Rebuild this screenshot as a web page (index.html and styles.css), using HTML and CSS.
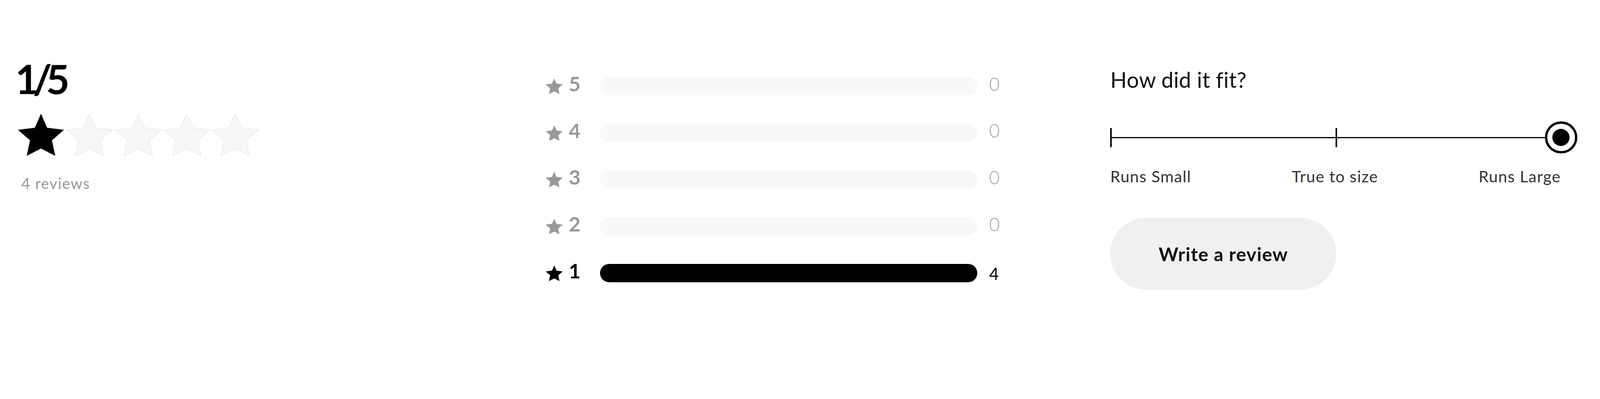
FILE: index.html
```html
<!DOCTYPE html>
<html lang="en">
<head>
<meta charset="utf-8">
<title>Reviews summary</title>
<link rel="stylesheet" href="styles.css">
</head>
<body>
<section class="reviews-summary">
  <div class="col-average">
    <div class="score">1/5</div>
    <div class="stars">
      <svg class="star star-full" viewBox="0 0 125.3 115"><polygon points="62.65,0 79.5,38.4 125.3,44 92.5,72.7 101.5,115 62.65,95 23.8,115 32.8,72.7 0,44 45.8,38.4"/></svg>
      <svg class="star star-empty" viewBox="0 0 125.3 115"><polygon points="62.65,0 79.5,38.4 125.3,44 92.5,72.7 101.5,115 62.65,95 23.8,115 32.8,72.7 0,44 45.8,38.4"/></svg>
      <svg class="star star-empty" viewBox="0 0 125.3 115"><polygon points="62.65,0 79.5,38.4 125.3,44 92.5,72.7 101.5,115 62.65,95 23.8,115 32.8,72.7 0,44 45.8,38.4"/></svg>
      <svg class="star star-empty" viewBox="0 0 125.3 115"><polygon points="62.65,0 79.5,38.4 125.3,44 92.5,72.7 101.5,115 62.65,95 23.8,115 32.8,72.7 0,44 45.8,38.4"/></svg>
      <svg class="star star-empty" viewBox="0 0 125.3 115"><polygon points="62.65,0 79.5,38.4 125.3,44 92.5,72.7 101.5,115 62.65,95 23.8,115 32.8,72.7 0,44 45.8,38.4"/></svg>
    </div>
    <div class="review-count">4 reviews</div>
  </div>

  <div class="col-histogram">
    <div class="hist-row">
      <svg class="hist-star" viewBox="0 0 125.3 115"><polygon points="62.65,0 79.5,38.4 125.3,44 92.5,72.7 101.5,115 62.65,95 23.8,115 32.8,72.7 0,44 45.8,38.4"/></svg>
      <span class="hist-num">5</span>
      <div class="hist-bar"><div class="hist-fill" style="width:0%"></div></div>
      <span class="hist-count">0</span>
    </div>
    <div class="hist-row">
      <svg class="hist-star" viewBox="0 0 125.3 115"><polygon points="62.65,0 79.5,38.4 125.3,44 92.5,72.7 101.5,115 62.65,95 23.8,115 32.8,72.7 0,44 45.8,38.4"/></svg>
      <span class="hist-num">4</span>
      <div class="hist-bar"><div class="hist-fill" style="width:0%"></div></div>
      <span class="hist-count">0</span>
    </div>
    <div class="hist-row">
      <svg class="hist-star" viewBox="0 0 125.3 115"><polygon points="62.65,0 79.5,38.4 125.3,44 92.5,72.7 101.5,115 62.65,95 23.8,115 32.8,72.7 0,44 45.8,38.4"/></svg>
      <span class="hist-num">3</span>
      <div class="hist-bar"><div class="hist-fill" style="width:0%"></div></div>
      <span class="hist-count">0</span>
    </div>
    <div class="hist-row">
      <svg class="hist-star" viewBox="0 0 125.3 115"><polygon points="62.65,0 79.5,38.4 125.3,44 92.5,72.7 101.5,115 62.65,95 23.8,115 32.8,72.7 0,44 45.8,38.4"/></svg>
      <span class="hist-num">2</span>
      <div class="hist-bar"><div class="hist-fill" style="width:0%"></div></div>
      <span class="hist-count">0</span>
    </div>
    <div class="hist-row is-active">
      <svg class="hist-star" viewBox="0 0 125.3 115"><polygon points="62.65,0 79.5,38.4 125.3,44 92.5,72.7 101.5,115 62.65,95 23.8,115 32.8,72.7 0,44 45.8,38.4"/></svg>
      <span class="hist-num">1</span>
      <div class="hist-bar"><div class="hist-fill" style="width:100%"></div></div>
      <span class="hist-count">4</span>
    </div>
  </div>

  <div class="col-fit">
    <div class="fit-title">How did it fit?</div>
    <div class="fit-slider">
      <div class="fit-track">
        <span class="fit-tick"></span>
        <span class="fit-seg"></span>
        <span class="fit-tick"></span>
        <span class="fit-seg"></span>
      </div>
      <span class="fit-knob"><span class="fit-dot"></span></span>
    </div>
    <div class="fit-labels">
      <span>Runs Small</span>
      <span>True to size</span>
      <span>Runs Large</span>
    </div>
    <button class="write-btn" type="button">Write a review</button>
  </div>
</section>
</body>
</html>
```

FILE: styles.css
```css
/* 1rem = 10 units of the 4414-wide design */
html {
  font-size: calc(100vw / 441.4);
}

html, body {
  margin: 0;
  padding: 0;
  background: #ffffff;
}

body {
  font-family: "Lato", "Liberation Sans", sans-serif;
  color: #111111;
  width: 100vw;
  height: 100vh;
  overflow: hidden;
}

.reviews-summary {
  display: flex;
  align-items: flex-start;
}

/* ---------- left: average ---------- */
.col-average {
  box-sizing: border-box;
  width: 150.5rem;
  padding-left: 4.2rem;
  padding-top: 16.1rem;
  display: flex;
  flex-direction: column;
}

.score {
  font-size: 11.2rem;
  line-height: 11.2rem;
  height: 11.2rem;
  font-weight: 700;
  color: #000;
  letter-spacing: -1.6rem;
}

.stars {
  display: flex;
  margin-top: 4.1rem;
  margin-left: 0.75rem;
  height: 11.7rem;
}

.star {
  width: 12.7rem;
  height: 11.7rem;
  margin-right: 0.7rem;
  display: block;
  overflow: visible;
}

.star-full polygon {
  fill: #000;
}

.star-empty polygon {
  fill: #f7f7f7;
  stroke: #e6e6e6;
  stroke-width: 1.3;
  stroke-linejoin: round;
}

.review-count {
  margin-top: 5.5rem;
  margin-left: 1.7rem;
  font-size: 4.1rem;
  line-height: 4rem;
  letter-spacing: 0.2rem;
  color: #999999;
}

/* ---------- middle: histogram ---------- */
.col-histogram {
  box-sizing: border-box;
  width: 155.8rem;
  padding-top: 21.3rem;
  display: flex;
  flex-direction: column;
  gap: 7.9rem;
}

.hist-row {
  display: flex;
  align-items: center;
  height: 5rem;
}

.hist-star {
  width: 4.7rem;
  height: 4.3rem;
  display: block;
  margin-right: 1.7rem;
}

.hist-star polygon {
  fill: #999999;
}

.hist-num {
  width: 8.6rem;
  font-size: 5.6rem;
  line-height: 5.6rem;
  padding-bottom: 1.3rem;
  font-weight: 700;
  color: #999999;
}

.hist-bar {
  width: 104.1rem;
  height: 5rem;
  border-radius: 2.5rem;
  background: #f8f8f8;
  overflow: hidden;
}

.hist-fill {
  height: 100%;
  background: #000;
  border-radius: 2.5rem;
}

.hist-count {
  margin-left: 3.3rem;
  font-size: 5rem;
  line-height: 5rem;
  padding-bottom: 1.3rem;
  color: #a3a3a3;
  font-weight: 300;
}

.is-active .hist-star polygon {
  fill: #000;
}

.is-active .hist-num {
  color: #000;
}

.is-active .hist-count {
  color: #000;
  font-size: 4.6rem;
  line-height: 4.6rem;
  font-weight: 400;
  padding-bottom: 0;
  padding-top: 0.4rem;
}

/* ---------- right: fit ---------- */
.col-fit {
  box-sizing: border-box;
  width: 128.8rem;
  padding-top: 19rem;
  display: flex;
  flex-direction: column;
  align-items: flex-start;
}

.fit-title {
  font-size: 6rem;
  line-height: 6rem;
  color: #111;
  letter-spacing: 0.03rem;
}

.fit-slider {
  position: relative;
  margin-top: 8.5rem;
  width: 128.8rem;
  height: 9rem;
  box-sizing: border-box;
  padding-right: 4.5rem;
  display: flex;
  align-items: center;
}

.fit-track {
  flex: 1;
  display: flex;
  align-items: center;
  height: 5.3rem;
}

.fit-tick {
  width: 0.4rem;
  height: 5.3rem;
  background: #000;
  flex: none;
}

.fit-seg {
  flex: 1;
  height: 0.4rem;
  background: #000;
}

.fit-knob {
  position: absolute;
  right: 0;
  top: 0;
  width: 8.9rem;
  height: 8.9rem;
  box-sizing: border-box;
  border: 0.7rem solid #000;
  border-radius: 50%;
  background: #fff;
  display: flex;
  align-items: center;
  justify-content: center;
}

.fit-dot {
  width: 4.8rem;
  height: 4.8rem;
  border-radius: 50%;
  background: #000;
}

.fit-labels {
  margin-top: 4.1rem;
  width: 124.3rem;
  display: flex;
  justify-content: space-between;
  font-size: 4.4rem;
  line-height: 4.4rem;
  color: #333333;
  letter-spacing: 0.15rem;
}

.write-btn {
  margin-top: 9.1rem;
  width: 62.4rem;
  height: 19.9rem;
  border: none;
  border-radius: 10rem;
  background: #f0f0f0;
  font-family: "Lato", "Liberation Sans", sans-serif;
  font-size: 5.2rem;
  font-weight: 700;
  letter-spacing: 0.13rem;
  color: #111;
  padding: 0;
  cursor: pointer;
}
```
